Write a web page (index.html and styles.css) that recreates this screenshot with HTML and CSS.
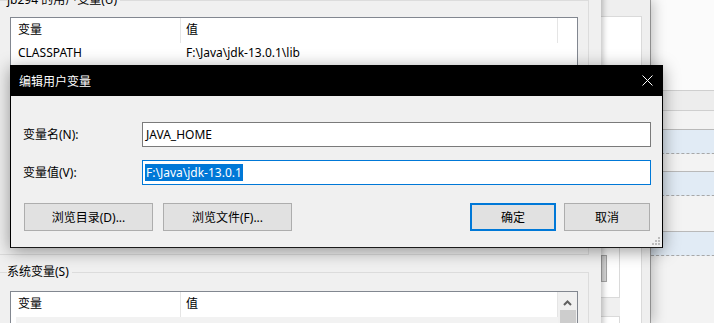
FILE: index.html
```html
<!DOCTYPE html>
<html lang="zh-CN">

<head>
  <meta charset="UTF-8">
  <meta name="viewport" content="width=device-width, initial-scale=1.0">
  <title>编辑用户变量</title>
  <link rel="stylesheet" href="styles.css">
</head>

<body>
  <div class="screen">
    <!-- 最右侧窗口 -->
    <div class="win win-right">
      <div class="rw-top"></div>
      <div class="rw-row rw-head"></div>
      <div class="rw-row rw-plain rw-h18"></div>
      <div class="rw-row rw-sel"></div>
      <div class="rw-row rw-plain rw-h17"></div>
      <div class="rw-row rw-sel"></div>
      <div class="rw-row rw-plain rw-h35"></div>
      <div class="rw-row rw-sel"></div>
      <div class="rw-rest"></div>
    </div>

    <!-- 中间窗口 -->
    <div class="win win-mid">
      <div class="pane">
        <div class="pane-top"></div>
        <div class="pane-split">
          <div class="slot-col">
            <div class="slot slot-a"><div class="mini-thumb"></div></div>
            <div class="slot slot-gap"></div>
            <div class="slot slot-b"></div>
          </div>
          <div class="slot-wide"></div>
        </div>
      </div>
    </div>

    <!-- 环境变量窗口 -->
    <div class="win win-env">
      <fieldset class="group group-user">
        <legend>jb294 的用户变量(U)</legend>
        <div class="list list-user">
          <div class="list-head">
            <span class="col col-name">变量</span>
            <span class="col col-val">值</span>
          </div>
          <div class="list-row">
            <span class="col col-name">CLASSPATH</span>
            <span class="col col-val">F:\Java\jdk-13.0.1\lib</span>
          </div>
        </div>
      </fieldset>

      <fieldset class="group group-sys">
        <legend>系统变量(S)</legend>
        <div class="list list-sys">
          <div class="list-main">
            <div class="list-head">
              <span class="col col-name">变量</span>
              <span class="col col-val">值</span>
            </div>
            <div class="list-row list-row-hot"></div>
          </div>
          <div class="vscroll">
            <div class="vscroll-up">
              <svg width="9" height="6" viewBox="0 0 9 6">
                <path d="M1 5 L4.5 1.5 L8 5" fill="none" stroke="#606060" stroke-width="2"/>
              </svg>
            </div>
            <div class="vscroll-thumb"></div>
          </div>
        </div>
      </fieldset>
    </div>

    <!-- 编辑用户变量对话框 -->
    <div class="dialog">
      <div class="dlg-title">
        <span>编辑用户变量</span>
        <svg class="dlg-close" width="11" height="11" viewBox="0 0 11 11">
          <path d="M0.5 0.5 L10.5 10.5 M10.5 0.5 L0.5 10.5" stroke="#fff" stroke-width="1"/>
        </svg>
      </div>
      <div class="dlg-body">
        <div class="field">
          <label>变量名(N):</label>
          <div class="input">JAVA_HOME</div>
        </div>
        <div class="field">
          <label>变量值(V):</label>
          <div class="input input-focus"><span class="sel">F:\Java\jdk-13.0.1</span></div>
        </div>
        <div class="btns">
          <button class="btn btn-wide">浏览目录(D)...</button>
          <button class="btn btn-wide">浏览文件(F)...</button>
          <span class="spacer"></span>
          <button class="btn btn-default">确定</button>
          <button class="btn">取消</button>
        </div>
        <svg class="grip" width="8" height="8" viewBox="0 0 8 8">
          <rect x="6" y="0" width="2" height="2" fill="#bcbcbc"/>
          <rect x="3" y="3" width="2" height="2" fill="#bcbcbc"/>
          <rect x="6" y="3" width="2" height="2" fill="#bcbcbc"/>
          <rect x="0" y="6" width="2" height="2" fill="#bcbcbc"/>
          <rect x="3" y="6" width="2" height="2" fill="#bcbcbc"/>
          <rect x="6" y="6" width="2" height="2" fill="#bcbcbc"/>
        </svg>
      </div>
    </div>
  </div>
</body>

</html>
```

FILE: styles.css
```css
* {
  margin: 0;
  padding: 0;
  box-sizing: border-box;
}

body {
  background: #f3f3f3;
}

.screen {
  position: relative;
  width: 714px;
  height: 323px;
  overflow: hidden;
  background: #f3f3f3;
  font-family: "Noto Sans", "Noto Sans CJK SC", sans-serif;
  font-size: 12px;
  color: #000;
}

/* 桌面上的窗口 */
.win {
  position: absolute;
}

/* 最右侧窗口 */
.win-right {
  left: 650px;
  top: 0;
  width: 80px;
  height: 323px;
  z-index: 1;
  background: #f3f3f3;
  border-left: 1px solid #a9a9a9;
}

.rw-top {
  height: 91px;
  background: #fbfbfb;
  border-bottom: 1px solid #cfcfcf;
}

.rw-row {
  border-bottom: 1px solid #b9b9b9;
}

.rw-head {
  height: 20px;
  background: #ededed;
  border-bottom-color: #cfcfcf;
}

.rw-plain {
  background: #f3f3f3;
}

.rw-h18 {
  height: 19px;
}

.rw-h17 {
  height: 18px;
}

.rw-h35 {
  height: 36px;
}

.rw-sel {
  height: 24px;
  background: #e1ebf5;
  border-bottom: 1px dashed #a8a8a8;
}

.rw-rest {
  height: 80px;
  background: #f3f3f3;
}

/* 中间窗口 */
.win-mid {
  left: 601px;
  top: 0;
  width: 49px;
  height: 323px;
  z-index: 2;
  background: #efefef;
  box-shadow: 4px 0 12px rgba(0, 0, 0, .22);
}

.pane {
  margin-top: 16px;
  width: 41px;
  height: 320px;
  background: #fff;
  border-top: 1px solid #dadada;
  border-right: 1px solid #dadada;
  display: flex;
  flex-direction: column;
}

.pane-top {
  height: 230px;
}

.pane-split {
  flex: 1;
  display: flex;
}

.slot-col {
  width: 19px;
  display: flex;
  flex-direction: column;
}

.slot {
  border-right: 1px solid #dadada;
}

.slot-a {
  height: 51px;
  border-bottom: 1px solid #dadada;
  padding-top: 8px;
}

.mini-thumb {
  width: 6px;
  height: 27px;
  background: #d6d6d6;
  border: 1px solid #a6a6a6;
}

.slot-gap {
  height: 18px;
  background: #f0f0f0;
  border-right: 0;
}

.slot-b {
  flex: 1;
  border-top: 1px solid #dadada;
}

.slot-wide {
  flex: 1;
}

/* 环境变量窗口 */
.win-env {
  left: 0;
  top: -16px;
  width: 601px;
  height: 345px;
  z-index: 3;
  background: #f0f0f0;
  overflow: hidden;
  box-shadow: 2px 0 6px rgba(0, 0, 0, .25);
}

.group {
  width: 590px;
  min-width: 0;
  margin-left: -1px;
  border: 1px solid #dcdcdc;
  padding: 9px 0 14px 10px;
}

.group legend {
  margin-left: -3px;
  padding: 0 3px 0 0;
  line-height: 16px;
  color: #000;
}

.group-user {
  margin-top: 8px;
}

.group-sys {
  margin-top: 9px;
  padding-top: 11px;
}

.list {
  width: 568px;
  background: #fff;
  border: 1px solid #828790;
}

.list-user {
  height: 223px;
}

.list-sys {
  height: 60px;
  display: flex;
}

.list-main {
  width: 547px;
}

.list-head {
  height: 25px;
  display: flex;
  align-items: stretch;
}

.list-head .col {
  border-right: 1px solid #e5e5e5;
  line-height: 24px;
}

.list-row {
  height: 20px;
  display: flex;
  line-height: 20px;
}

.col {
  display: block;
  white-space: nowrap;
}

.col-name {
  width: 170px;
  padding-left: 7px;
}

.col-val {
  width: 377px;
  padding-left: 5px;
}

.list-row-hot {
  margin-left: 5px;
  background: #f2f2f2;
}

.vscroll {
  width: 19px;
  background: #f0f0f0;
  display: flex;
  flex-direction: column;
  align-items: center;
}

.vscroll-up {
  height: 18px;
  display: flex;
  align-items: center;
  justify-content: center;
  padding-top: 3px;
}

.vscroll-thumb {
  width: 16px;
  flex: 1;
  background: #cdcdcd;
}

/* 对话框 */
.dialog {
  position: absolute;
  left: 10px;
  top: 65px;
  width: 653px;
  z-index: 4;
  border: 1px solid #000;
  border-bottom-color: #1b1b1b;
  background: #f0f0f0;
  box-shadow: 0 3px 16px rgba(0, 0, 0, .4);
}

.dlg-title {
  height: 30px;
  background: #000;
  color: #fff;
  display: flex;
  align-items: center;
  justify-content: space-between;
  padding: 0 9px 0 8px;
}

.dlg-close {
  display: block;
  margin-top: -1px;
}

.dlg-body {
  position: relative;
  padding: 26px 11px 16px 12px;
}

.field {
  display: flex;
  align-items: center;
  height: 25px;
}

.field + .field {
  margin-top: 13px;
}

.field label {
  width: 119px;
  line-height: 16px;
}

.input {
  flex: 1;
  height: 25px;
  background: #fff;
  border: 1px solid #7a7a7a;
  padding-left: 3px;
  line-height: 23px;
  display: flex;
  align-items: center;
  white-space: nowrap;
}

.input-focus {
  border-color: #0078d7;
}

.sel {
  display: block;
  margin-left: -1px;
  padding: 0 1px;
  line-height: 17px;
  background: #0078d7;
  color: #fff;
}

.btns {
  display: flex;
  margin: 18px 1px 0 1px;
  height: 28px;
}

.btn {
  width: 86px;
  height: 28px;
  background: #e1e1e1;
  border: 1px solid #adadad;
  font: inherit;
  color: #000;
}

.btn-wide {
  width: 129px;
}

.btn-wide + .btn-wide {
  margin-left: 10px;
}

.spacer {
  flex: 1;
}

.btn-default {
  border: 2px solid #0078d7;
  margin-right: 8px;
}

.grip {
  position: absolute;
  right: 2px;
  bottom: 2px;
}
```
